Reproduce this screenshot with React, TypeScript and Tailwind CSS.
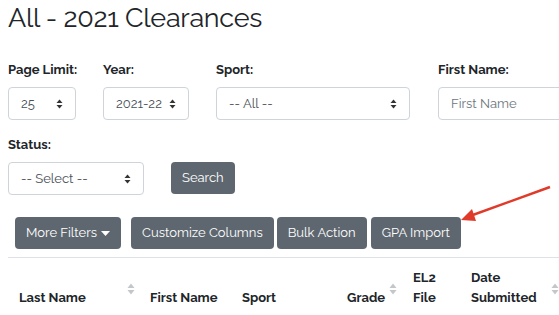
import React from "react";

const font = { fontFamily: "Raleway, Lato, 'Open Sans', sans-serif" };

function Caret() {
  return (
    <svg width="7" height="10" viewBox="0 0 7 10" className="shrink-0">
      <path d="M3.5 0.5 L6.5 4 H0.5 Z" fill="#333" />
      <path d="M3.5 9.5 L6.5 6 H0.5 Z" fill="#333" />
    </svg>
  );
}

function SortIcon() {
  return (
    <svg width="8" height="12" viewBox="0 0 8 12">
      <path d="M4 0.5 L7.5 5 H0.5 Z" fill="#c4c7ca" />
      <path d="M4 11.5 L7.5 7 H0.5 Z" fill="#c4c7ca" />
    </svg>
  );
}

function Select({ value, w }: { value: string; w: string }) {
  return (
    <div
      className={`${w} h-[33px] flex items-center justify-between px-[12px] border border-[#ced4da] rounded-[4px] text-[13px] text-[#495057] bg-white`}
    >
      <span className="whitespace-nowrap">{value}</span>
      <Caret />
    </div>
  );
}

function Label({ children }: { children: React.ReactNode }) {
  return (
    <div className="text-[13px] font-bold text-[#212529] h-[17px] leading-[17px] mb-[9px] whitespace-nowrap">
      {children}
    </div>
  );
}

const btn =
  "h-[32px] px-[11px] rounded-[4px] bg-[#5e676f] text-white text-[13px] flex items-center whitespace-nowrap";

export default function App() {
  return (
    <div className="relative w-[559px] h-[315px] overflow-hidden bg-white text-[#212529]" style={font}>
      <h1 className="pl-[8px] pt-[2px] text-[27px] leading-[32px] font-normal tracking-[-0.3px] text-[#212529]">
        All - 2021 Clearances
      </h1>

      {/* Filtr sırası */}
      <div className="flex pl-[8px] mt-[27px]">
        <div className="w-[68px] shrink-0 mr-[27px]">
          <Label>Page Limit:</Label>
          <Select value="25" w="w-[68px]" />
        </div>
        <div className="w-[86px] shrink-0 mr-[27px]">
          <Label>Year:</Label>
          <Select value="2021-22" w="w-[86px]" />
        </div>
        <div className="w-[194px] shrink-0 mr-[28px]">
          <Label>Sport:</Label>
          <Select value="-- All --" w="w-[194px]" />
        </div>
        <div className="shrink-0">
          <Label>First Name:</Label>
          <div className="w-[140px] h-[33px] flex items-center px-[12px] border border-[#ced4da] rounded-[4px] text-[13px] text-[#6c757d] whitespace-nowrap">
            First Name
          </div>
        </div>
      </div>

      <div className="flex pl-[8px] mt-[16px]">
        <div className="w-[136px] shrink-0 mr-[27px]">
          <Label>Status:</Label>
          <Select value="-- Select --" w="w-[136px]" />
        </div>
        <div className="pt-[26px]">
          <div className={btn}>Search</div>
        </div>
      </div>

      {/* Düymələr */}
      <div className="flex pl-[15px] mt-[22px]">
        <div className={`${btn} mr-[10px]`}>
          More Filters
          <svg width="9" height="5" viewBox="0 0 9 5" className="ml-[4px]">
            <path d="M0 0 H9 L4.5 5 Z" fill="white" />
          </svg>
        </div>
        <div className={`${btn} mr-[3px]`}>Customize Columns</div>
        <div className={`${btn} mr-[4px]`}>Bulk Action</div>
        <div className={btn}>GPA Import</div>
      </div>

      <div className="ml-[8px] mt-[8px] border-t border-[#dee2e6]" />

      {/* Cədvəl başlığı */}
      <div className="relative flex items-end pl-[19px] pb-[7px] text-[13px] leading-[20px] font-bold text-[#212529] h-[57px] whitespace-nowrap">
        <div className="w-[131px]">Last Name</div>
        <div className="w-[92px]">First Name</div>
        <div className="w-[105px]">Sport</div>
        <div className="w-[66px]">Grade</div>
        <div className="w-[58px]">
          EL2
          <br />
          File
        </div>
        <div>
          Date
          <br />
          Submitted
        </div>
        <span className="absolute left-[127px] top-[25px]"><SortIcon /></span>
        <span className="absolute left-[389px] top-[25px]"><SortIcon /></span>
        <span className="absolute left-[551px] top-[25px]"><SortIcon /></span>
      </div>

      {/* Qırmızı ox */}
      <svg className="absolute left-0 top-0 pointer-events-none" width="559" height="315">
        <line x1="550" y1="187" x2="470" y2="216" stroke="#e03a2a" strokeWidth="2.5" />
        <path d="M461 220 L472 209 L476 221 Z" fill="#e03a2a" />
      </svg>
    </div>
  );
}
